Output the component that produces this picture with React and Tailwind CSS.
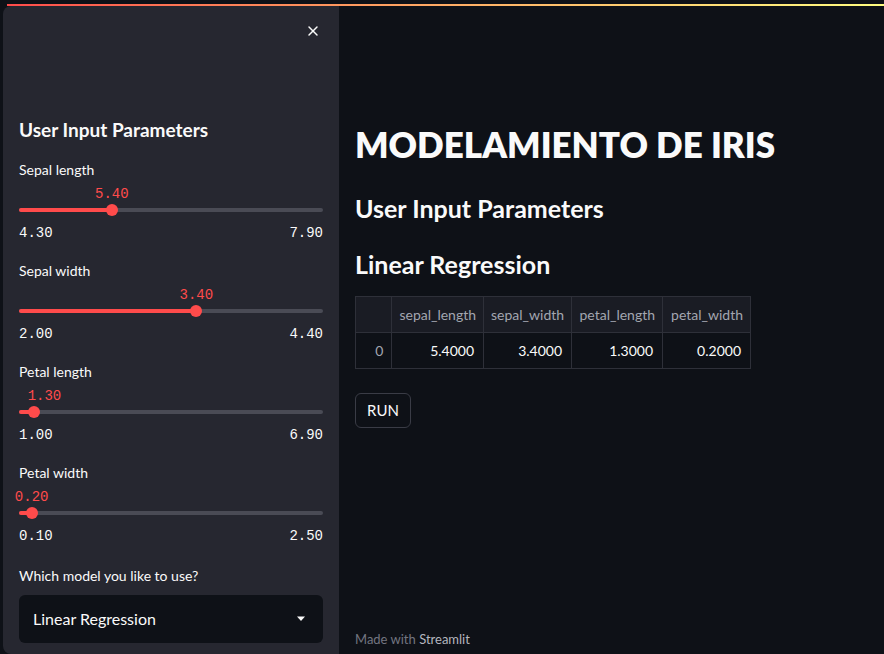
import { X } from "lucide-react";

const sliders = [
  { label: "Sepal length", min: 4.3, max: 7.9, value: 5.4, shift: 0 },
  { label: "Sepal width", min: 2.0, max: 4.4, value: 3.4, shift: 0 },
  { label: "Petal length", min: 1.0, max: 6.9, value: 1.3, shift: 10 },
  { label: "Petal width", min: 0.1, max: 2.5, value: 0.2, shift: 0 },
];

const cols = [
  { name: "sepal_length", value: "5.4000", w: "w-[91px]" },
  { name: "sepal_width", value: "3.4000", w: "w-[88px]" },
  { name: "petal_length", value: "1.3000", w: "w-[91px]" },
  { name: "petal_width", value: "0.2000", w: "w-[88px]" },
];

function Slider({ label, min, max, value, shift }) {
  const pct = ((value - min) / (max - min)) * 100;
  return (
    <div className="mb-[19px]">
      <div className="h-[20px] text-[14px] leading-[20px] text-[#fafafa]">{label}</div>
      <div className="relative mt-[5px] h-[39px]">
        <div
          className="absolute top-0 -translate-x-1/2 font-['Liberation_Mono',monospace] text-[14px] leading-[18px] text-[#ff4b4b]"
          style={{ left: `calc(${pct}% + ${shift}px)` }}
        >
          {value.toFixed(2)}
        </div>
        <div className="absolute left-0 right-0 top-[23px] h-[4px] rounded-full bg-[#4a4b55]" />
        <div
          className="absolute left-0 top-[23px] h-[4px] rounded-full bg-[#ff4b4b]"
          style={{ width: `${pct}%` }}
        />
        <div
          className="absolute top-[19px] h-[12px] w-[12px] -translate-x-1/2 rounded-full bg-[#ff4b4b]"
          style={{ left: `${pct}%` }}
        />
      </div>
      <div className="flex h-[18px] justify-between font-['Liberation_Mono',monospace] text-[14px] leading-[18px] text-[#fafafa]">
        <span>{min.toFixed(2)}</span>
        <span>{max.toFixed(2)}</span>
      </div>
    </div>
  );
}

export default function App() {
  return (
    <div className="relative h-[654px] w-[884px] overflow-hidden bg-[#0e1117] font-['Lato',sans-serif] text-[#fafafa]">
      <div className="absolute left-[7px] right-0 top-[4px] h-[2px] bg-gradient-to-r from-[#ff4b4b] to-[#fffd80]" />
      <div className="flex h-full pl-[3px] pt-[6px]">
        <aside className="h-full w-[336px] shrink-0 rounded-tl-[8px] rounded-bl-[8px] bg-[#262730] px-[16px]">
          <div className="flex h-[110px] justify-end pr-[2px] pt-[17px]">
            <X size={16} strokeWidth={2.2} className="text-[#fafafa]" />
          </div>
          <h2 className="mb-[16px] h-[28px] text-[19px] font-bold leading-[28px]">User Input Parameters</h2>
          {sliders.map((s) => (
            <Slider key={s.label} {...s} />
          ))}
          <div className="mt-[21px] h-[20px] text-[14px] leading-[20px]">Which model you like to use?</div>
          <div className="mt-[9px] flex h-[48px] items-center justify-between rounded-[6px] bg-[#0e1117] pl-[14px] pr-[17px]">
            <span className="text-[16px]">Linear Regression</span>
            <svg width="10" height="6" viewBox="0 0 10 6">
              <path d="M1 0.5 L9 0.5 L5 5 Z" fill="#fafafa" />
            </svg>
          </div>
        </aside>
        <main className="flex flex-1 flex-col pl-[16px]">
          <h1 className="mt-[116px] h-[44px] text-[35px] font-extrabold leading-[44px]">MODELAMIENTO DE IRIS</h1>
          <h2 className="mt-[26px] h-[32px] text-[25px] font-bold leading-[32px]">User Input Parameters</h2>
          <h2 className="mt-[24px] h-[32px] text-[25px] font-bold leading-[32px]">Linear Regression</h2>
          <table className="mt-[16px] w-[396px] border-collapse text-[14px]">
            <thead>
              <tr className="h-[36px] bg-[#1a1c24]">
                <th className="w-[37px] border border-[#2e3039]" />
                {cols.map((c) => (
                  <th
                    key={c.name}
                    className={`${c.w} border border-[#2e3039] px-[7px] text-right font-normal text-[#a3a6b0]`}
                  >
                    {c.name}
                  </th>
                ))}
              </tr>
            </thead>
            <tbody>
              <tr className="h-[36px]">
                <td className="border border-[#2e3039] px-[8px] text-right text-[#a3a6b0]">0</td>
                {cols.map((c) => (
                  <td key={c.name} className="border border-[#2e3039] px-[9px] text-right">
                    {c.value}
                  </td>
                ))}
              </tr>
            </tbody>
          </table>
          <button className="mt-[24px] flex h-[35px] w-[56px] items-center justify-center rounded-[6px] border border-[#3a3c46] text-[15px]">
            RUN
          </button>
          <div className="mt-auto mb-[5px] text-[13px] text-[#737580]">
            Made with <span className="text-[#b4b6bf]">Streamlit</span>
          </div>
        </main>
      </div>
    </div>
  );
}
